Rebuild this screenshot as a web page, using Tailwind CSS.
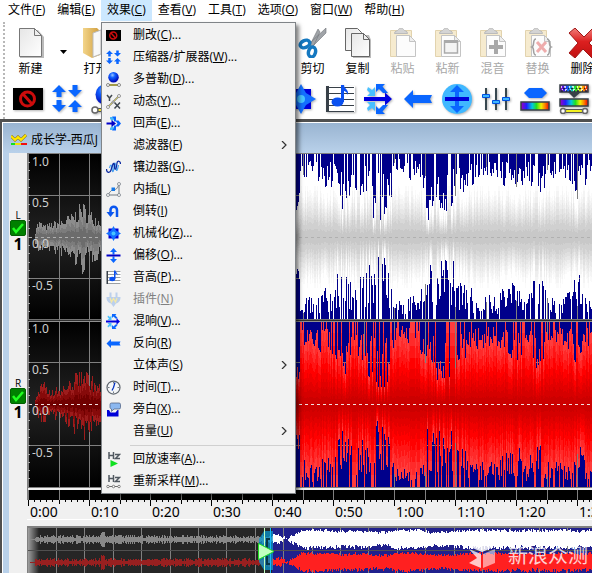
<!DOCTYPE html>
<html lang="zh-CN">
<head>
<meta charset="utf-8">
<meta name="viewport" content="width=device-width, initial-scale=1">
<title>成长学-西瓜</title>
<script src="https://cdn.jsdelivr.net/npm/@tailwindcss/browser@4"></script>
</head>
<body class="flex h-screen flex-col overflow-hidden bg-white font-['Open_Sans','Noto_Sans_CJK_SC',sans-serif] text-xs text-black">

<svg class="absolute size-0" aria-hidden="true">
  <defs>
    <linearGradient id="page" x1="0" y1="0" x2="1" y2="1"><stop offset="0" stop-color="#e6e6e6"/><stop offset="1" stop-color="#fff"/></linearGradient>
    <linearGradient id="rainbow"><stop offset="0" stop-color="#a000c0"/><stop offset=".2" stop-color="#2020ff"/><stop offset=".4" stop-color="#00c8e0"/><stop offset=".55" stop-color="#20e020"/><stop offset=".72" stop-color="#f0f000"/><stop offset=".86" stop-color="#ff8000"/><stop offset="1" stop-color="#f00000"/></linearGradient>
    <radialGradient id="ball" cx=".4" cy=".3" r=".7"><stop offset="0" stop-color="#9cc4ff"/><stop offset=".35" stop-color="#1060ff"/><stop offset="1" stop-color="#0000b0"/></radialGradient>
    <linearGradient id="folder"><stop offset="0" stop-color="#f3d58a"/><stop offset="1" stop-color="#cf9c3c"/></linearGradient>
    <linearGradient id="cross" x1="0" y1="0" x2="0" y2="1"><stop offset="0" stop-color="#f0807c"/><stop offset=".45" stop-color="#dc2020"/><stop offset="1" stop-color="#c01010"/></linearGradient>
  </defs>

  <symbol id="i-censor" viewBox="0 0 30 30"><path fill="#000" d="M0 4h30v22H0z"/><circle cx="14.500" cy="15" r="7" fill="none" stroke="#cc0c0c" stroke-width="3"/><path stroke="#cc0c0c" stroke-width="3" d="m10 10 9 10"/></symbol>
  <symbol id="i-compress" viewBox="0 0 30 30"><path fill="#0a66ff" d="M7 1l7 7h-4.500v5h-5V8H0zM20.500 1h5v5H30l-7 7-7-7h4.500zM4.500 16h5v5H14l-7 7-7-7h4.500zM23 16l7 7h-4.500v5h-5v-5H16z"/></symbol>
  <symbol id="i-doppler" viewBox="0 0 30 30"><circle cx="15" cy="10.500" r="10.500" fill="url(#ball)"/><path stroke="#555" stroke-width="4" d="M6 26h18"/><path stroke="#f2e23a" stroke-width="2" d="M6 26h18"/><g fill="#fff" stroke="#666" stroke-width="1.500"><circle cx="4" cy="26" r="3"/><circle cx="26" cy="26" r="3"/></g></symbol>
  <symbol id="i-dynamics" viewBox="0 0 30 30"><path stroke="#777" stroke-width="3.500" d="M5 25 25 5"/><path stroke="#e8dc50" stroke-width="1.500" d="M5 25 25 5"/><g fill="#fff" stroke="#777" stroke-width="1.500"><circle cx="4" cy="26" r="3"/><circle cx="26" cy="4" r="3"/><circle cx="14" cy="16" r="2"/></g><path fill="none" stroke="#404850" stroke-width="3" d="m2 2 5 6 5-6M7 8v6M17 17l11 12M28 17 17 29"/></symbol>
  <symbol id="i-echo" viewBox="0 0 30 30"><path fill="#48b8f8" d="M8 2h8v5l-3 3-5-4zM8 28h8v-5l-3-3-5 4z"/><path fill="#0a66ff" d="M12 1h8v8h5l5 6-5 6h-5v8h-8l4-5v-5h4l3-4-3-4h-4V6z"/><path fill="#0000c8" d="M1 13h10V8l9 7-9 7v-5H1z"/></symbol>
  <symbol id="i-flange" viewBox="0 0 30 30"><path fill="none" stroke="#48a0f0" stroke-width="2.500" d="M7 16c2-8 4-8 5 1s3 8 4-3 3-10 4 1 3 5 5-5"/><path fill="none" stroke="#0a28a0" stroke-width="2.500" d="M1 18c0 8 7 9 9 2l3-9c2-7 4-5 4 2s2 8 4 0l1-7c1-6 7-4 7 2"/></symbol>
  <symbol id="i-interp" viewBox="0 0 30 30"><path fill="none" stroke="#707880" stroke-width="2" d="M4 26C9 17 13 15 17 15s6-3 9-11v22H4"/><g fill="#fff" stroke="#707880" stroke-width="1.500"><circle cx="4" cy="26" r="3"/><circle cx="26" cy="4" r="3"/><circle cx="26" cy="26" r="3"/></g><path fill="#1478e8" d="M11 11h7v7h-7z"/></symbol>
  <symbol id="i-invert" viewBox="0 0 30 30"><path fill="none" stroke="#0a56f0" stroke-width="5" d="M9 18v-6a6 6 0 0 1 13 0v14"/><path fill="#0a56f0" d="M1 16h16l-8 10z"/></symbol>
  <symbol id="i-mech" viewBox="0 0 30 30"><path fill="#0000d8" d="M5 5h20v20H5z"/><path fill="#1470ff" d="m15 0 5 9 10 6-10 6-5 9-5-9-10-6 10-6z"/><circle cx="15" cy="15" r="4" fill="#48c4ff"/></symbol>
  <symbol id="i-offset" viewBox="0 0 30 30"><path fill="#0a66ff" d="m15 0 7 8h-5v5h-4V8H8zM15 30l7-8h-5v-5h-4v5H8z"/><path fill="#0000c8" d="M1 13h28v4H1z"/></symbol>
  <symbol id="i-offset-round" viewBox="0 0 30 30"><circle cx="15" cy="15" r="15" fill="#40b8ff"/><path fill="#0a66ff" d="m15 1 7 7h-5v5h-4V8H8zM15 29l7-7h-5v-5h-4v5H8z"/><path fill="#0000d8" d="M3 13h24v4H3z"/></symbol>
  <symbol id="i-pitch" viewBox="0 0 30 30"><path fill="#fff" d="M2 2h28v26H2z"/><path fill="#384048" d="M1 2h3v26H1zM4 3h25v1H4zm0 6h25v1H4zm0 6h25v1H4zm0 6h25v1H4zm0 6h25v1H4z"/><ellipse cx="12.500" cy="18" rx="6" ry="4.500" fill="#0a50f0"/><path fill="#0a50f0" d="M16 1h3c0 4 5 4 4 10-1-3-3-4-4-4v11h-3z"/></symbol>
  <symbol id="i-plugin" viewBox="0 0 30 30"><path fill="#bcd0ec" d="M7 1h4v9h8V1h4v9h6c0 8-4 12-9 13l-5 7-5-7c-5-1-9-5-9-13h6z"/><path fill="none" stroke="#f4e8a8" stroke-width="2.500" d="m8 12 3 8 4-7 4 7 3-8"/></symbol>
  <symbol id="i-reverb" viewBox="0 0 30 30"><path fill="#48c0ff" d="m4 3 4 3 3-3v9H3l3-3-3-3zM4 27l4-3 3 3v-9H3l3 3-3 3z"/><path fill="#0a66ff" d="M12 0h9l-2.500 2.500L24 9h-5l-4-4-3 3zM12 30h9l-2.500-2.500L24 21h-5l-4 4-3-3z"/><path fill="#0000e0" d="M0 13h21V8.500l7 6.500-7 6.500V17H0z"/></symbol>
  <symbol id="i-reverse" viewBox="0 0 30 30"><path fill="#0a66ff" d="M1 15 10 6v5h19l-2 4 2 4H10v5z"/></symbol>
  <symbol id="i-eq" viewBox="0 0 30 30"><path fill="#384850" d="M4 4h2v22H4zm10 0h2v22h-2zm10 0h2v22h-2z"/><g fill="#40b8ff" stroke="#0050e0"><path d="M1.500 10.500h7v3h-7zM11.500 16.500h7v3h-7zM21.500 13.500h7v3h-7z"/></g></symbol>
  <symbol id="i-spectrum" viewBox="0 0 30 30"><path fill="#0a66ff" d="M4 9 9 4h13l5 5-5 5H9z"/><path fill="url(#rainbow)" stroke="#384048" stroke-width="1.500" d="M1 18h28v8H1z"/></symbol>
  <symbol id="i-filter" viewBox="0 0 30 30"><path fill="url(#rainbow)" stroke="#384048" stroke-width="1.500" d="M1 1h28v7H1zM1 15h28v7H1z"/><path stroke="#fff" stroke-width="1.500" stroke-dasharray="1 2 2 3" d="M2 3h26M3 6h25"/><path stroke="#202040" stroke-width="1.500" stroke-dasharray="2 3 1 2" d="M4 4.500h24M2 7h26"/><path fill="#384048" d="M9 8h13l-7 6z"/><path stroke="#555" stroke-width="4" d="M5 27h20"/><path stroke="#f2f020" stroke-width="2" d="M5 27h20"/><g fill="#fff" stroke="#666" stroke-width="1.500"><circle cx="4" cy="27" r="2.500"/><circle cx="26" cy="27" r="2.500"/></g></symbol>
  <symbol id="i-clock" viewBox="0 0 30 30"><circle cx="15" cy="15" r="13" fill="#f4f6f8" stroke="#606870" stroke-width="2.500"/><path fill="none" stroke="#0030c0" stroke-width="2.500" d="m18 5-3 10-3 6"/><path stroke="#707880" stroke-width="2" d="M4 15h3M23 15h3M15 23v3M15 4v3"/></symbol>
  <symbol id="i-voice" viewBox="0 0 30 30"><path fill="#8cb8f0" stroke="#506080" stroke-width="1.500" d="M11 2h15q3 0 3 3v6q0 3-3 3H16l-5 5v-5q-3-1-3-3V5q0-3 3-3z"/><path fill="#0000d8" d="M2 16h4l3 5h10l4-5h2v13H2z"/></symbol>
  <symbol id="i-rate" viewBox="0 0 30 30"><path fill="none" stroke="#505860" stroke-width="3" d="M6 0v14M15 0v14M6 7h9M18 5h9l-8 8h9"/><path fill="#10e020" d="m9 16 15 7-15 7z"/></symbol>
  <symbol id="i-resample" viewBox="0 0 30 30"><path fill="none" stroke="#505860" stroke-width="3" d="M6 2v14M15 2v14M6 9h9M18 7h9l-8 8h9"/><path stroke="#707070" stroke-width="2" d="M4 25h22"/><g fill="#fff" stroke="#606060" stroke-width="1.500"><circle cx="4" cy="25" r="2.500"/><circle cx="15" cy="25" r="2.500"/><circle cx="26" cy="25" r="2.500"/></g></symbol>

  <symbol id="t-new" viewBox="0 0 30 30"><path fill="#bbb" d="M4 2h18l6 7v21H4z"/><path fill="url(#page)" stroke="#777" d="M3.500.5h15l7 7v21h-22z"/><path fill="#eee" stroke="#777" d="M18.500.5v7h7z"/></symbol>
  <symbol id="t-open" viewBox="0 0 30 30"><path fill="url(#folder)" d="M2 0h14l3 3v24l-8 3-9-5z"/><path fill="#f8f8f8" stroke="#bbb" d="m12 5 8-3v24l-8 3z"/><path fill="#e8c068" d="m20 5 9-2v25l-9 2z"/></symbol>
  <symbol id="t-cut" viewBox="0 0 30 30"><path fill="#a0a4a8" stroke="#707478" stroke-width=".6" d="M28 0v5L14 19l-3-3zM20 1l2 3-7 15-3-2z"/><g fill="none" stroke="#1478c0" stroke-width="3.500"><ellipse cx="7" cy="16" rx="5" ry="3.500" transform="rotate(-25 7 16)"/><ellipse cx="14" cy="24" rx="3.500" ry="5" transform="rotate(15 14 24)"/></g></symbol>
  <symbol id="t-copy" viewBox="0 0 30 30"><path fill="url(#page)" stroke="#666" d="M2.500.5h12l4 4v18h-16z"/><path fill="#bbb" d="M10 7h16l2 5v18H10z"/><path fill="url(#page)" stroke="#666" d="M8.500 5.500h12l6 6v17h-18z"/><path fill="#eee" stroke="#666" d="M20.500 5.500v6h6z"/></symbol>
  <symbol id="t-clip" viewBox="0 0 30 30"><path fill="#f6ebcf" stroke="#e2d3ae" d="M2.500 2.500h21v26h-21z"/><path fill="#d4d4d4" stroke="#bbb" d="M6.500 5.500c0-3 3-2 4-4s4-2 5 0 4 1 4 4z"/><path fill="#fcfcfc" stroke="#c4c4c4" d="M8.500 7.500h13l6 6v15h-19z"/><path fill="#eee" stroke="#c4c4c4" d="M21.500 7.500v6h6z"/></symbol>
  <symbol id="t-clipnew" viewBox="0 0 30 30"><use href="#t-clip"/><path fill="#f4f4f4" stroke="#aaa" stroke-width="1.500" d="M11.500 13h13v12h-13z"/><path fill="#aaa" d="M11 12h14v3H11z"/></symbol>
  <symbol id="t-mix" viewBox="0 0 30 30"><use href="#t-clip"/><path fill="#a8a8a8" d="M16 12h4v5h5v4h-5v5h-4v-5h-5v-4h5z"/></symbol>
  <symbol id="t-replace" viewBox="0 0 30 30"><use href="#t-clip"/><path stroke="#eeacac" stroke-width="3" d="m14 14 9 10M23 14l-9 10"/><path fill="none" stroke="#a0a0a0" stroke-width="1.500" d="M13 11c-4 0-1 7-4 8 3 1 0 8 4 8M24 11c4 0 1 7 4 8-3 1 0 8-4 8"/></symbol>
  <symbol id="t-delete" viewBox="0 0 30 30"><path fill="url(#cross)" stroke="#a01818" d="M1 5 7 0l9 9 9-9 5 5-9 10 9 9-6 6-9-9-8 9-6-5 9-10z"/></symbol>
</svg>

<header class="relative z-20 flex h-[21px] shrink-0 items-stretch bg-white pl-0.5">
  <nav class="flex" aria-label="菜单栏" id="menubar">
    <button class="px-1.5 pb-0.5 whitespace-nowrap">文件(<u>F</u>)</button>
    <button class="px-1.5 pb-0.5 whitespace-nowrap">编辑(<u>E</u>)</button>
    <div class="relative flex">
      <button class="bg-[#cce8ff] px-1.5 pb-0.5 whitespace-nowrap" aria-expanded="true">效果(<u>C</u>)</button>
      <div id="menu" role="menu" class="absolute top-full left-0 mt-px w-[195px] border border-[#808488] bg-[#f2f2f2] py-px shadow-[3px_3px_4px_rgba(0,0,0,0.5)]"></div>
    </div>
    <button class="px-1.5 pb-0.5 whitespace-nowrap">查看(<u>V</u>)</button>
    <button class="px-1.5 pb-0.5 whitespace-nowrap">工具(<u>T</u>)</button>
    <button class="px-1.5 pb-0.5 whitespace-nowrap">选项(<u>O</u>)</button>
    <button class="px-1.5 pb-0.5 whitespace-nowrap">窗口(<u>W</u>)</button>
    <button class="px-1.5 pb-0.5 whitespace-nowrap">帮助(<u>H</u>)</button>
  </nav>
</header>

<section class="flex h-[98px] shrink-0 overflow-hidden bg-white" aria-label="工具栏">
  <div class="mt-px mr-[3px] ml-[3px] w-0 border-l-2 border-dotted border-[#b8b8b8]"></div>
  <div class="flex flex-col pt-[7px]">
    <div id="files" class="flex h-12"></div>
    <div id="effects" class="mt-2 flex"></div>
  </div>
</section>

<main class="flex min-h-0 flex-1 flex-col border-t-3 border-l-2 border-[#505050] bg-[#b9d1ea]">
  <div class="flex h-[31px] shrink-0 items-center gap-1 border-t border-l border-white bg-linear-to-b from-[#99b4d1] to-[#b9d1ea] pt-1 pl-2">
    <svg class="h-4 w-4 shrink-0" viewBox="0 0 16 16" aria-hidden="true"><path fill="none" stroke="#806000" stroke-width="3" d="m0 4 4 4 3-3 3 3 5-5"/><path fill="none" stroke="#ffe800" stroke-width="2" d="m0 4 4 4 3-3 3 3 5-5"/><path fill="#10e020" d="M0 11h4v2H0z"/><path fill="#f0e000" d="M4 11h6v2H4z"/><path fill="#f01010" d="M10 11h6v2h-6z"/></svg>
    <h1 class="whitespace-nowrap">成长学-西瓜J</h1>
  </div>
  <div class="flex min-h-0 flex-1 border-l border-white pl-1.5">
    <aside class="flex w-[18px] shrink-0 flex-col bg-[#f0f0f0] text-center">
      <label class="flex h-[168px] flex-col items-center justify-center pb-3 text-[10px] leading-[10px]">L
        <span class="relative block size-4"><input type="checkbox" checked class="block size-4 appearance-none rounded-xs border border-[#006000] bg-[#008000]"><svg class="pointer-events-none absolute inset-0" viewBox="0 0 16 16"><path fill="none" stroke="#20ff20" stroke-width="2.500" d="m3 8 3 4 7-8"/></svg></span>
        <b class="text-base leading-4">1</b></label>
      <label class="flex h-[168px] flex-col items-center justify-center pb-3 text-[10px] leading-[10px]">R
        <span class="relative block size-4"><input type="checkbox" checked class="block size-4 appearance-none rounded-xs border border-[#006000] bg-[#008000]"><svg class="pointer-events-none absolute inset-0" viewBox="0 0 16 16"><path fill="none" stroke="#20ff20" stroke-width="2.500" d="m3 8 3 4 7-8"/></svg></span>
        <b class="text-base leading-4">1</b></label>
    </aside>
    <div class="flex min-w-0 flex-1 flex-col bg-[#f0f0f0]">
      <svg id="wave" class="block h-[347px] w-full shrink-0 bg-black" role="img" aria-label="波形"></svg>
      <svg id="ruler" class="block h-5 w-full shrink-0 border-b border-white" role="img" aria-label="时间标尺"></svg>
      <div class="relative mt-1.5 min-h-0 flex-1 border-t-2 border-l border-[#808080] bg-[#262626]">
        <svg id="overview" class="block h-full w-full" role="img" aria-label="概览"></svg>
        <div class="absolute right-1 bottom-0.5 flex items-center gap-3 text-white/80">
          <svg class="h-7 w-7" viewBox="0 0 28 28" aria-hidden="true"><path fill="#fff" fill-opacity=".85" d="M14 1 26 6 14 11 2 6z"/><path fill="#fff" fill-opacity=".75" d="m1 8 12 5v14L1 22l8-5z"/><path fill="#fff" fill-opacity=".55" d="m27 8-12 5v14l12-5z"/></svg>
          <span class="font-['Noto_Sans_CJK_SC',sans-serif] text-xl leading-8 whitespace-nowrap">新浪众测</span>
        </div>
      </div>
    </div>
  </div>
</main>

<script>
const items = [
  ['censor', '删改', 'C', '...'], ['compress', '压缩器/扩展器', 'W', '...'], ['doppler', '多普勒', 'D', '...'],
  ['dynamics', '动态', 'Y', '...'], ['echo', '回声', 'E', '...'], ['', '滤波器', 'F', '>'], ['flange', '镶边器', 'G', '...'],
  ['interp', '内插', 'L', ''], ['invert', '倒转', 'I', ''], ['mech', '机械化', 'Z', '...'], ['offset', '偏移', 'O', '...'],
  ['pitch', '音高', 'P', '...'], ['plugin', '插件', 'N', 'off'], ['reverb', '混响', 'V', '...'], ['reverse', '反向', 'R', ''],
  ['', '立体声', 'S', '>'], ['clock', '时间', 'T', '...'], ['voice', '旁白', 'X', '...'], ['', '音量', 'U', '>'], null,
  ['rate', '回放速率', 'A', '...'], ['resample', '重新采样', 'M', '...']
];
document.getElementById('menu').innerHTML = items.map(i => {
  if (!i) return '<div role="separator" class="mt-[3px] mr-px mb-0.5 ml-7 border-t border-[#d0d0d0]"></div>';
  const [icon, name, key, end] = i;
  const pic = icon ? `<svg class="h-[15px] w-[15px]" aria-hidden="true"><use href="#i-${icon}"/></svg>` : '';
  const arrow = end === '>' ? '<svg class="mr-2 ml-auto h-2 w-[6px]" viewBox="0 0 6 8" aria-hidden="true"><path fill="none" stroke="#333" stroke-width="1.200" d="m1 0 4 4-4 4"/></svg>' : '';
  return `<button role="menuitem" ${end === 'off' ? 'disabled' : ''} class="flex h-[22px] w-full items-center text-left whitespace-nowrap disabled:text-[#808080]"><span class="w-[31px] shrink-0 pl-1">${pic}</span><span>${name}(<u>${key}</u>)${end === '...' ? end : ''}</span>${arrow}</button>`;
}).join('');

const tool = (icon, name, off) => `<button ${off ? 'disabled' : ''} class="flex w-[45px] shrink-0 flex-col items-center gap-[3px] disabled:text-[#a8a8a8]"><svg class="h-[30px] w-[30px]" aria-hidden="true"><use href="#t-${icon}"/></svg><span class="leading-[15px] whitespace-nowrap">${name}</span></button>`;
document.getElementById('files').innerHTML =
  tool('new', '新建') +
  '<button class="flex w-5 shrink-0 items-center justify-center" aria-label="新建选项"><svg class="h-1 w-[7px]" viewBox="0 0 7 4"><path d="M0 0h7L3.500 4z"/></svg></button>' +
  tool('open', '打开') + '<span class="w-[172px] shrink-0"></span>' +
  tool('cut', '剪切') + tool('copy', '复制') + tool('clip', '粘贴', 1) + tool('clipnew', '粘新', 1) + tool('mix', '混音', 1) + tool('replace', '替换', 1) + tool('delete', '删除');
document.getElementById('effects').innerHTML =
  ['censor', 'compress', 'doppler', 'dynamics', 'echo', 'flange', 'invert', 'mech', 'pitch', 'reverb', 'reverse', 'offset-round', 'eq', 'spectrum', 'filter']
  .map(n => `<button class="flex w-[39px] shrink-0 justify-center" aria-label="${n}"><svg class="h-[30px] w-[30px] drop-shadow-[1px_1px_1px_rgba(0,0,0,0.3)]"><use href="#i-${n}"/></svg></button>`).join('');

let seed = 7;
const rnd = () => (seed = (seed * 16807) % 2147483647) / 2147483647;
const lerp = (pts, x) => {
  for (let i = 1; i < pts.length; i++) if (x <= pts[i][0]) {
    const [a, b] = [pts[i - 1], pts[i]];
    return a[1] + (b[1] - a[1]) * (x - a[0]) / (b[0] - a[0]);
  }
  return pts[pts.length - 1][1];
};
const rect = (x, y, w, h, c) => `<rect x="${x}" y="${y}" width="${w}" height="${h}" fill="${c}"/>`;
const bars = (cols, mid, f, c) => `<path fill="${c}" d="${cols.map(([x, u, d]) => { const a = Math.round(u * f), b = Math.round(d * f); return `M${x} ${mid - a}h1v${a + b}h-1z`; }).join('')}"/>`;

// Typical gap between the wave's peak and the channel's edge, by x.
const gaps = [[269, 60], [273, 24], [283, 16], [294, 24], [305, 26], [312, 42], [318, 44], [326, 26], [334, 34], [343, 44], [348, 52], [359, 52], [363, 38], [367, 16], [376, 14], [384, 20], [396, 26], [400, 50], [408, 46], [424, 50], [430, 32], [440, 26], [448, 22], [466, 18], [484, 28], [492, 30], [499, 16], [509, 36], [520, 24], [531, 18], [543, 22], [551, 38], [562, 18], [900, 18]];
const quietL = [[7, 0], [9, 13], [12, 16], [18, 11], [28, 16], [36, 18], [44, 22], [50, 28], [55, 34], [60, 26], [68, 22], [74, 16], [240, 22]];
const quietR = [[7, 0], [9, 8], [15, 22], [22, 14], [30, 16], [38, 18], [46, 26], [55, 36], [61, 30], [68, 22], [74, 18], [240, 22]];
const width = window.innerWidth - 27;

function channel(top, quiet, live, still, dash) {
  const mid = top + 83, a = [], b = [];
  for (let x = 8; x < 245; x++) a.push([x, lerp(quiet, x) * (.5 + .6 * rnd()), lerp(quiet, x) * (.4 + .75 * rnd())]);
  for (let x = 245; x < width; x++) {
    const g = lerp(gaps, x), loud = rnd() < .16;
    const one = k => { const r = rnd(); return x < 273 ? 25 + 20 * rnd() : 83 - (loud || r < .08 ? 0 : Math.min(66, g * k * (.3 + 1.05 * rnd()))); };
    b.push([x, one(1), one(1)]);
  }
  let s = rect(0, top, 245, 166, `url(#dark${top})`) + rect(245, top, width, 166, '#00008b');
  s += `<defs><linearGradient id="dark${top}" x1="0" y1="0" x2="0" y2="1"><stop offset="0"/><stop offset=".5" stop-color="#222"/><stop offset="1"/></linearGradient></defs>`;
  for (let n = 0; n * 30.5 < width; n++) s += rect(Math.round(1 + n * 30.5), top, 1, 166, '#808080');
  s += rect(0, top + 41, width, 1, '#808080') + rect(0, top + 124, width, 1, '#808080');
  still.forEach(([f, c]) => s += bars(a, mid, f, c));
  live.forEach(([f, c]) => s += bars(b, mid, f, c));
  s += `<path stroke="${dash}" stroke-dasharray="3 3" d="M2 ${mid + .5}H${width}"/>`;
  for (let y = 8; y < 166; y += 8.3) s += rect(1, Math.round(top + y), 2, 1, '#aaa');
  [['1.0', 12], ['0.5', 53], ['0.0', 94], ['-0.5', 136]].forEach(([t, y]) => s += `<text x="5" y="${top + y}" fill="#d0d0d0" font-size="12" font-family="Noto Sans">${t}</text>`);
  return s;
}
let w = rect(0, 337, width, 10, '#000');
for (let n = 0; n * 30.5 < width; n++) w += rect(Math.round(1 + n * 30.5), 337, 1, 10, '#808080');
w += channel(1, quietL,
  [[1, '#ffffff'], [.62, '#fafafa'], [.55, '#f4f4f4'], [.48, '#eeeeee'], [.41, '#e7e7e7'], [.34, '#e0e0e0'], [.27, '#d8d8d8'], [.2, '#d0d0d0'], [.1, '#c8c8c8']],
  [[1, '#8c8c8c'], [.6, '#7c7c7c'], [.3, '#6c6c6c']], '#b0b0b0');
w += channel(168, quietR,
  [[1, '#ff3c3c'], [.85, '#ff2a2a'], [.7, '#ff1414'], [.55, '#ff0000'], [.42, '#f00000'], [.3, '#e20000'], [.2, '#d60000'], [.1, '#cc0000']],
  [[1, '#9c1c1c'], [.65, '#860a0a'], [.3, '#700000']], '#f0e0e0');
w += rect(0, 0, width, 1, '#808080') + rect(0, 166, width, 1, '#707070') + rect(0, 167, width, 1, '#303030') + rect(0, 168, width, 1, '#909090') + rect(0, 334, width, 1, '#808080') + rect(0, 335, width, 2, '#f0f0f0') + rect(0, 0, 1, 347, '#808080');
document.getElementById('wave').innerHTML = w;

let r = '';
for (let n = 0; n * 6.1 < width; n++) r += rect(Math.round(1 + n * 6.1), 0, 1, n % 10 === 0 ? 6 : n % 5 === 0 ? 4 : 2, '#000');
for (let n = 0; n * 61 < width; n++) r += `<text x="${3 + n * 61}" y="17" font-size="14" font-family="Noto Sans">${Math.floor(n / 6)}:${n % 6}0</text>`;
document.getElementById('ruler').innerHTML = r;

function strip(mid, quiet, live) {
  const a = [], b = [];
  for (let x = 2; x < 244; x++) { const e = x < 7 ? 0 : 1 + 3 * rnd() + (x > 72 && x < 77 ? 4 : 0); a.push([x, e, e + 1]); }
  for (let x = 244; x < width; x++) { const g = lerp(gaps, x) / 16; b.push([x, x < 254 ? 2 + 3 * rnd() : 11.5 - g - 3 * rnd(), x < 254 ? 2 + 3 * rnd() : 12 - g - 4 * rnd()]); }
  return bars(a, mid, 1, quiet) + bars(b, mid, 1, live);
}
let o = '<defs><linearGradient id="fade"><stop offset="0" stop-color="#a0a0a0"/><stop offset="1" stop-color="#262626"/></linearGradient></defs>' + rect(0, 0, 11, 60, 'url(#fade)') + rect(244, 0, width, 60, '#20208c');
for (let x = 28; x < width; x += 28.4) o += rect(Math.round(x), 0, 1, 60, '#808080');
o += strip(11, '#888888', '#ffffff') + strip(34, '#982020', '#ff2020') + rect(0, 22, width, 1, '#505050');
o += '<path fill="#0a98d0" fill-opacity=".75" d="M236 3h9v39h-9l-5-8V11z"/><path fill="none" stroke="#083848" stroke-width="2" d="M243 11h-4v10M239 28v8h4"/>';
o += rect(236, 0, 1, 60, '#c0ffc0') + rect(242, 0, 1, 60, '#10b8ff') + '<path fill="#c0ffc0" stroke="#20e020" d="M230.500 15.500 246 23.500l-15.500 8z"/>';
document.getElementById('overview').innerHTML = o;
</script>
</body>
</html>
